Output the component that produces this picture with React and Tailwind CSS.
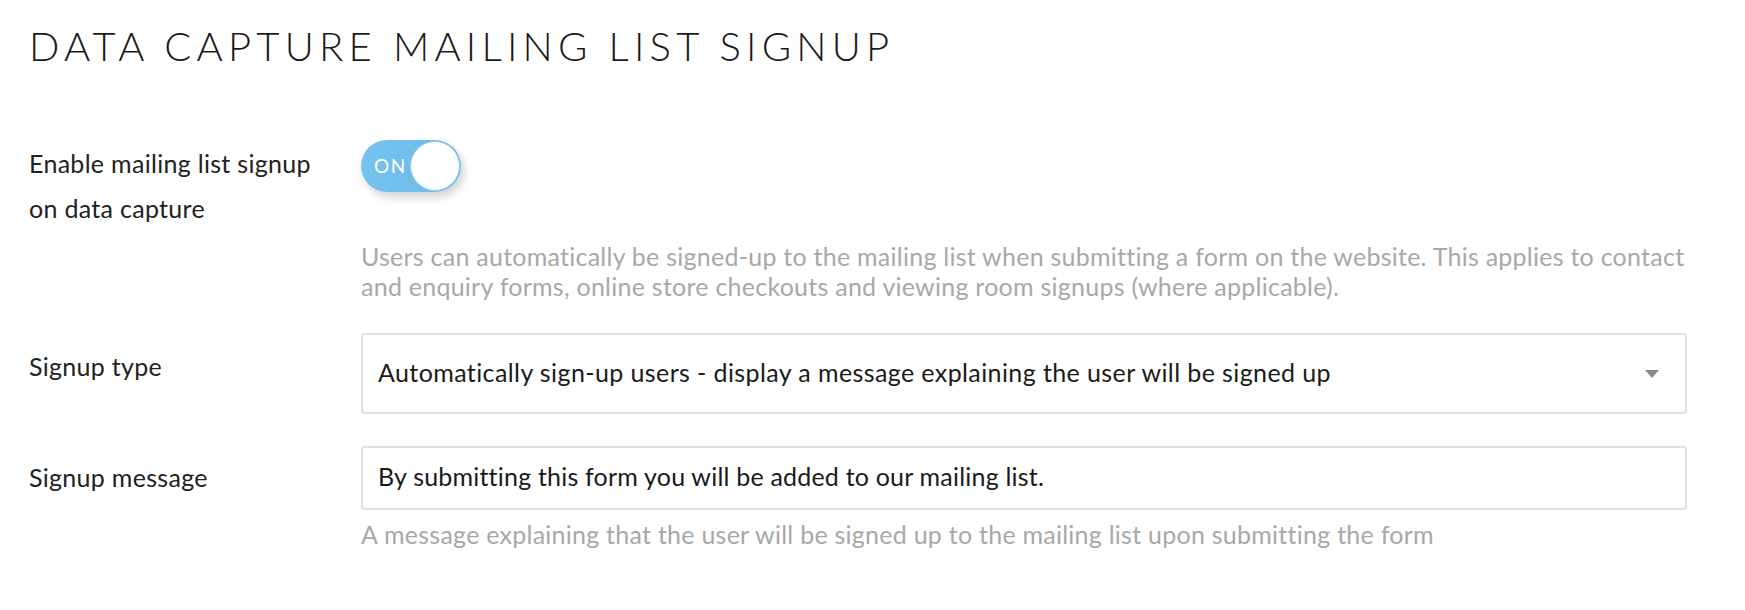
import React from "react";

function Toggle() {
  return (
    <div className="relative w-[100px] h-[52px] rounded-full bg-gradient-to-r from-[#76c3f0] to-[#6db8e6] shadow-[3px_5px_8px_rgba(0,0,0,0.18)]">
      <span className="absolute left-[13px] top-0 h-[52px] leading-[52px] text-[19px] tracking-[1.5px] text-white">ON</span>
      <span className="absolute right-[1px] top-[1px] w-[50px] h-[50px] rounded-full bg-white border border-[#8fcdf2]"></span>
    </div>
  );
}

function Caret() {
  return (
    <svg width="14" height="8" viewBox="0 0 14 8" className="block">
      <path d="M0 0 L14 0 L7 8 Z" fill="#8a8a8a" />
    </svg>
  );
}

export default function App() {
  return (
    <div className="w-[1745px] h-[610px] bg-white pl-[29px] pt-[22px] text-[#222] tracking-[0.3px]" style={{ fontFamily: "Lato, 'Liberation Sans', sans-serif" }}>
      <h1 className="text-[40px] leading-[48px] font-light tracking-[5.2px] text-[#1a1a1a]">DATA CAPTURE MAILING LIST SIGNUP</h1>

      <div className="mt-[69px] flex">
        <div className="w-[332px] pt-[2px] text-[25px] leading-[45px]">
          <div>Enable mailing list signup</div>
          <div>on data capture</div>
        </div>
        <div className="flex-1 pr-[58px]">
          <div className="pt-[1px]">
            <Toggle />
          </div>
          <p className="mt-[49px] text-[25px] leading-[30px] text-[#a8a8a8] whitespace-nowrap tracking-[0.25px]">
            Users can automatically be signed-up to the mailing list when submitting a form on the website. This applies to contact
            <br />
            and enquiry forms, online store checkouts and viewing room signups (where applicable).
          </p>
        </div>
      </div>

      <div className="mt-[32px] flex items-start">
        <div className="w-[332px] pt-[11px] text-[25px] leading-[45px]">Signup type</div>
        <div className="flex-1 pr-[58px]">
          <div className="h-[81px] border-2 border-[#e0e0e0] rounded-[4px] pl-[15px] pr-[26px] flex items-center justify-between">
            <span className="text-[25px] text-[#1a1a1a] -mt-[2px] tracking-[0.4px]">Automatically sign-up users - display a message explaining the user will be signed up</span>
            <Caret />
          </div>
        </div>
      </div>

      <div className="mt-[32px] flex items-start">
        <div className="w-[332px] pt-[9px] text-[25px] leading-[45px]">Signup message</div>
        <div className="flex-1 pr-[58px]">
          <div className="h-[64px] border-2 border-[#e0e0e0] rounded-[4px] pl-[15px] flex items-center">
            <span className="text-[25px] text-[#1a1a1a] -mt-[2px] tracking-[0.2px]">By submitting this form you will be added to our mailing list.</span>
          </div>
          <p className="mt-[9px] text-[25px] leading-[30px] text-[#a8a8a8] tracking-[0.25px]">
            A message explaining that the user will be signed up to the mailing list upon submitting the form
          </p>
        </div>
      </div>
    </div>
  );
}
